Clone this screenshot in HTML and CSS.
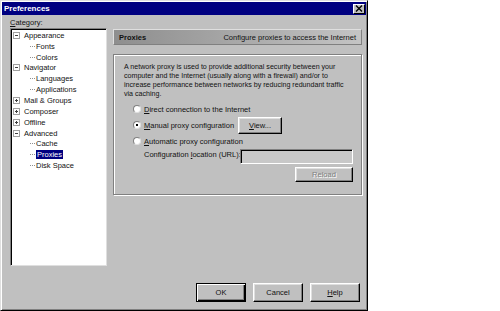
FILE: index.html
```html
<!DOCTYPE html>
<html lang="en">

<head>
    <meta charset="UTF-8">
    <title>Preferences</title>
    <link rel="stylesheet" href="styles.css">
</head>

<body>
<div class="dialog">
    <div class="titlebar">
        <span class="title">Preferences</span>
        <span class="close">
            <svg width="8" height="7" viewBox="0 0 8 7">
                <path d="M1 0.5 L7 6.5 M7 0.5 L1 6.5" stroke="#000" stroke-width="1.4"/>
            </svg>
        </span>
    </div>

    <div class="main">
        <div class="category">
            <div class="label"><u>C</u>ategory:</div>
            <div class="tree">
                <div class="node"><span class="toggle open"></span>Appearance</div>
                <div class="child"><span class="branch"></span>Fonts</div>
                <div class="child"><span class="branch"></span>Colors</div>
                <div class="node"><span class="toggle open"></span>Navigator</div>
                <div class="child"><span class="branch"></span>Languages</div>
                <div class="child"><span class="branch"></span>Applications</div>
                <div class="node"><span class="toggle"></span>Mail &amp; Groups</div>
                <div class="node"><span class="toggle"></span>Composer</div>
                <div class="node"><span class="toggle"></span>Offline</div>
                <div class="node"><span class="toggle open"></span>Advanced</div>
                <div class="child"><span class="branch"></span>Cache</div>
                <div class="child"><span class="branch"></span><span class="selected">Proxies</span></div>
                <div class="child"><span class="branch"></span>Disk Space</div>
            </div>
        </div>

        <div class="panel">
            <div class="header">
                <b>Proxies</b>
                <span>Configure proxies to access the Internet</span>
            </div>
            <div class="group">
                <p>A network proxy is used to provide additional security between your<br>
                    computer and the Internet (usually along with a firewall) and/or to<br>
                    increase performance between networks by reducing redundant traffic<br>
                    via caching.</p>

                <div class="row first">
                    <span class="option"><span class="radio"></span><u>D</u>irect connection to the Internet</span>
                </div>
                <div class="row">
                    <span class="option"><span class="radio checked"></span><u>M</u>anual proxy configuration</span>
                    <button class="btn view"><u>V</u>iew...</button>
                </div>
                <div class="row">
                    <span class="option"><span class="radio"></span><u>A</u>utomatic proxy configuration</span>
                </div>
                <div class="row location">
                    <span class="loc-label">Configuration <u>l</u>ocation (URL):</span>
                    <span class="field"></span>
                </div>
                <div class="row reload-row">
                    <button class="btn reload" disabled>Reload</button>
                </div>
            </div>
        </div>
    </div>

    <div class="buttons">
        <button class="btn big default">OK</button>
        <button class="btn big">Cancel</button>
        <button class="btn big"><u>H</u>elp</button>
    </div>
</div>
</body>

</html>
```

FILE: styles.css
```css
/* Netscape style preferences dialog */
body {
    margin: 0;
    background-color: #fff;
    font-family: "Liberation Sans", Arial, sans-serif;
    font-size: 7.5px;
    color: #111;
}

.dialog {
    width: 368px;
    height: 311px;
    box-sizing: border-box;
    background-color: #c0c0c0;
    border: 1px solid;
    border-color: #dfdfdf #000 #000 #dfdfdf;
    box-shadow: inset 1px 1px #fff, inset -1px -1px #808080;
    padding: 1px;
    display: flex;
    flex-direction: column;
}

.titlebar {
    height: 13px;
    background-color: #000080;
    display: flex;
    align-items: center;
    justify-content: space-between;
    padding: 0 1px 0 2px;
}

.title {
    color: #fff;
    font-weight: bold;
    font-size: 8px;
}

.close {
    width: 12px;
    height: 10px;
    box-sizing: border-box;
    background-color: #c0c0c0;
    border: 1px solid;
    border-color: #fff #000 #000 #fff;
    display: flex;
    align-items: center;
    justify-content: center;
}

.main {
    flex: 1;
    display: flex;
    gap: 6px;
    padding: 0 4px 0 8px;
}

.category {
    flex: none;
    width: 97px;
}

.label {
    margin-top: 3px;
    line-height: 10px;
}

.tree {
    height: 238px;
    box-sizing: border-box;
    background-color: #fff;
    border: 1px solid;
    border-color: #808080 #dfdfdf #dfdfdf #808080;
    box-shadow: inset 1px 1px #000;
    padding-top: 1px;
}

.node,
.child {
    display: flex;
    align-items: center;
    height: 10.85px;
    white-space: nowrap;
}

.node {
    padding-left: 2px;
}

.toggle {
    position: relative;
    flex: none;
    width: 7px;
    height: 7px;
    box-sizing: border-box;
    border: 1px solid #a0a0a0;
    margin-right: 4px;
}

.toggle::before,
.toggle:not(.open)::after {
    content: "";
    position: absolute;
    background-color: #404040;
}

.toggle::before {
    left: 1px;
    top: 2px;
    width: 3px;
    height: 1px;
}

.toggle:not(.open)::after {
    left: 2px;
    top: 1px;
    width: 1px;
    height: 3px;
}

.child {
    padding-left: 19px;
}

.branch {
    flex: none;
    width: 5px;
    border-top: 1px dotted #909090;
    margin-right: 1px;
}

.selected {
    background-color: #000080;
    color: #fff;
    padding: 0 1px;
}

.panel {
    flex: 1;
    min-width: 0;
    padding-top: 14px;
}

.header {
    height: 16px;
    box-sizing: border-box;
    display: flex;
    align-items: center;
    justify-content: space-between;
    padding: 0 5px;
    background: linear-gradient(to right, #8e8e8e, #a8a8a8 50%, #c4c4c4);
    border: 1px solid;
    border-color: #dfdfdf #808080 #808080 #dfdfdf;
    white-space: nowrap;
}

.group {
    margin-top: 9px;
    height: 141px;
    box-sizing: border-box;
    border: 1px solid #808080;
    box-shadow: inset 1px 1px #fff, 1px 1px #fff;
    padding: 8px 8px 0 10px;
}

.group p {
    margin: 0;
    font-size: 7.1px;
    line-height: 9px;
    white-space: nowrap;
}

.row {
    display: flex;
    align-items: center;
    margin-top: 2px;
}

.row.first {
    margin-top: 4.5px;
    height: 11px;
}

.option {
    flex: none;
    width: 114px;
    box-sizing: border-box;
    padding-left: 9px;
    display: flex;
    align-items: center;
    white-space: nowrap;
    line-height: 11px;
}

.radio {
    position: relative;
    flex: none;
    width: 8px;
    height: 8px;
    box-sizing: border-box;
    border-radius: 50%;
    background-color: #fff;
    border: 1px solid;
    border-color: #808080 #dfdfdf #dfdfdf #808080;
    margin-right: 3px;
}

.radio.checked::after {
    content: "";
    position: absolute;
    left: 2px;
    top: 2px;
    width: 2px;
    height: 2px;
    background-color: #000;
}

.location {
    align-items: flex-start;
}

.loc-label {
    flex: none;
    width: 96px;
    margin-left: 20px;
    line-height: 11px;
    white-space: nowrap;
}

.field {
    flex: none;
    width: 113px;
    height: 15px;
    box-sizing: border-box;
    border: 1px solid;
    border-color: #808080 #fff #fff #808080;
    box-shadow: inset 1px 1px #000;
    background-color: #c8c8c8;
}

.reload-row {
    justify-content: flex-end;
    margin-top: 3px;
}

.btn {
    font-family: inherit;
    font-size: 7.5px;
    color: #111;
    background-color: #c0c0c0;
    border: 1px solid;
    border-color: #fff #000 #000 #fff;
    box-shadow: inset -1px -1px #808080, inset 1px 1px #dfdfdf;
    padding: 0;
    border-radius: 0;
}

.view {
    flex: none;
    width: 44px;
    height: 17px;
}

.reload {
    width: 58px;
    height: 15px;
    color: #808080;
    text-shadow: 1px 1px #fff;
}

.buttons {
    display: flex;
    justify-content: flex-end;
    gap: 7px;
    padding: 0 6px 7px 0;
}

.big {
    width: 50px;
    height: 19px;
}

.default {
    border: 1px solid #000;
    box-shadow: inset 1px 1px #fff, inset -1px -1px #000, inset -2px -2px #808080;
}
```
